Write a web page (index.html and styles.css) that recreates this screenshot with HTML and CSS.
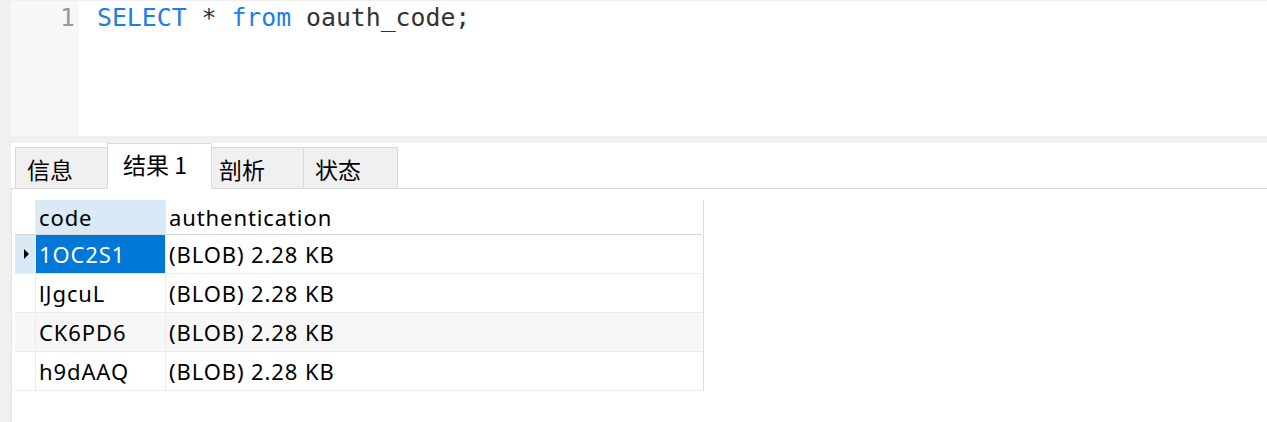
FILE: index.html
```html
<!DOCTYPE html>
<html lang="zh">
<head>
<meta charset="utf-8">
<title>Query</title>
<link rel="stylesheet" href="styles.css">
</head>
<body>
<div class="app">
  <div class="editor">
    <div class="gutter"><span class="ln">1</span></div>
    <div class="code"><span class="kw">SELECT</span> * <span class="kw">from</span> oauth_code;</div>
  </div>
  <div class="results">
    <div class="tabs">
      <div class="tab tab-info">信息</div>
      <div class="tab tab-active">结果 1</div>
      <div class="tab tab-profile">剖析</div>
      <div class="tab tab-status">状态</div>
    </div>
    <div class="panel">
      <div class="grid">
        <div class="cell ind head"></div>
        <div class="cell head col-code">code</div>
        <div class="cell head">authentication</div>

        <div class="cell ind cur"><span class="arrow"></span></div>
        <div class="cell sel">1OC2S1</div>
        <div class="cell">(BLOB) 2.28 KB</div>

        <div class="cell ind"></div>
        <div class="cell">lJgcuL</div>
        <div class="cell">(BLOB) 2.28 KB</div>

        <div class="cell ind alt"></div>
        <div class="cell alt">CK6PD6</div>
        <div class="cell alt">(BLOB) 2.28 KB</div>

        <div class="cell ind"></div>
        <div class="cell">h9dAAQ</div>
        <div class="cell">(BLOB) 2.28 KB</div>
      </div>
    </div>
  </div>
</div>
</body>
</html>
```
FILE: styles.css
```css
html, body {
  margin: 0;
  padding: 0;
}
body {
  background: #f0f0f0;
  width: 1267px;
  height: 422px;
  overflow: hidden;
}
.app {
  display: flex;
  flex-direction: column;
  height: 422px;
  padding-left: 11px;
  box-sizing: border-box;
}
.editor {
  display: flex;
  height: 135px;
  margin-top: 1px;
  background: #ffffff;
}
.gutter {
  width: 64px;
  padding-right: 4px;
  background: #f7f7f7;
  text-align: right;
  font-family: "DejaVu Sans Mono", monospace;
  font-size: 24.8px;
  line-height: 34px;
  color: #999999;
}
.code {
  flex: 1;
  padding-left: 18px;
  font-family: "DejaVu Sans Mono", monospace;
  font-size: 24.8px;
  line-height: 34px;
  color: #333333;
  white-space: pre;
}
.kw {
  color: #1a7fe6;
}
.results {
  flex: 1;
  margin-top: 7px;
  background: #ffffff;
  display: flex;
  flex-direction: column;
}
.tabs {
  display: flex;
  align-items: flex-end;
  height: 45px;
  padding-left: 4px;
  border-bottom: 1px solid #d9d9d9;
  font-family: "Noto Sans CJK SC", "Noto Sans", sans-serif;
  font-size: 23px;
  color: #000000;
}
.tab {
  box-sizing: border-box;
  height: 42px;
  margin-bottom: -1px;
  background: #f0f0f0;
  border: 1px solid #d9d9d9;
  line-height: 42px;
  margin-left: -1px;
}
.tab:first-child {
  margin-left: 0;
}
.tab-info {
  width: 93px;
  padding-left: 11px;
}
.tab-active {
  width: 105px;
  height: 46px;
  padding-left: 15px;
  background: #ffffff;
  border-bottom-color: #ffffff;
  line-height: 40px;
  position: relative;
  z-index: 1;
}
.tab-profile {
  width: 93px;
  padding-left: 7px;
}
.tab-status {
  width: 95px;
  padding-left: 11px;
}
.panel {
  flex: 1;
  border-left: 1px solid #e3e3e3;
  padding: 11px 0 0 3px;
}
.grid {
  display: grid;
  grid-template-columns: 21px 130px 536px;
  width: 688px;
  border-right: 1px solid #dcdcdc;
  font-family: "Noto Sans", sans-serif;
  font-size: 22px;
  letter-spacing: 0.9px;
  color: #000000;
}
.cell {
  box-sizing: border-box;
  height: 39px;
  padding-left: 3px;
  border-bottom: 1px solid #ebebeb;
  border-right: 1px solid #ebebeb;
  display: flex;
  align-items: center;
  white-space: nowrap;
}
.cell.head {
  height: 35px;
  border-bottom: 1px solid #d6d6d6;
}
.grid .cell:nth-child(3n) {
  border-right: none;
}
.col-code {
  background: #d9e9f6;
}
.ind {
  padding-left: 0;
  justify-content: center;
}
.ind.cur {
  background: #d9e9f6;
}
.arrow {
  width: 0;
  height: 0;
  border-top: 5px solid transparent;
  border-bottom: 5px solid transparent;
  border-left: 5px solid #000000;
  margin-left: 2px;
}
.sel {
  background: #0078d7;
  color: #ffffff;
}
.alt {
  background: #f7f7f7;
}
```
